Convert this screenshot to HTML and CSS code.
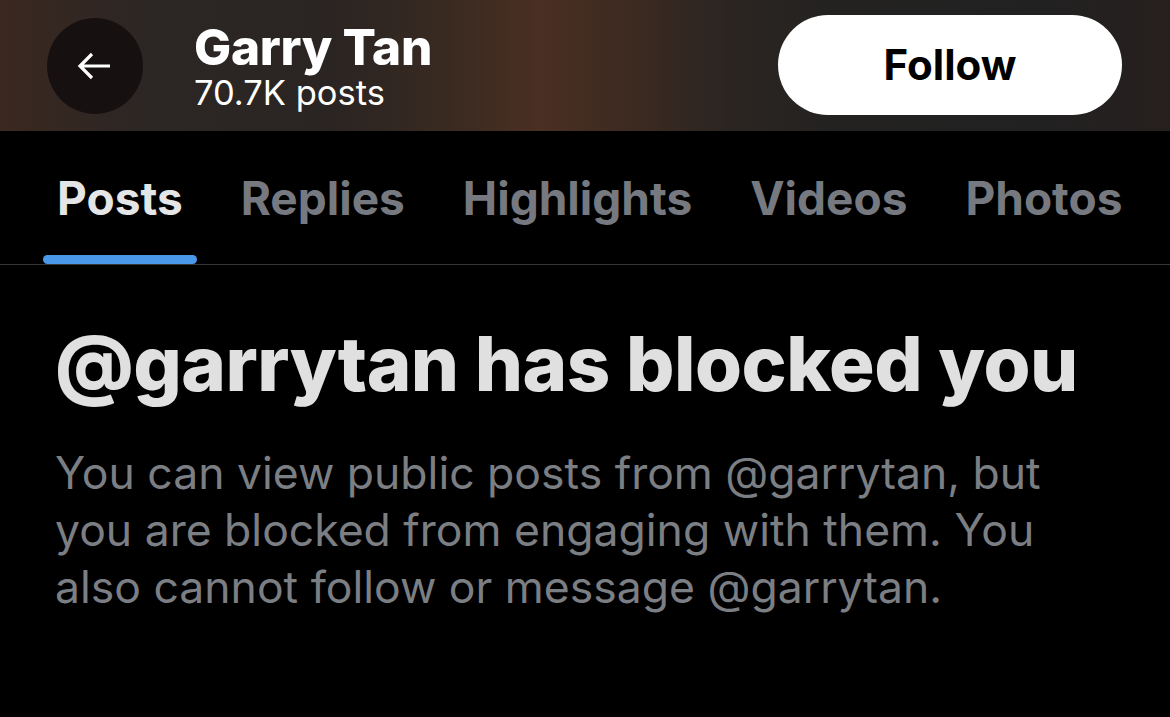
FILE: index.html
```html
<!DOCTYPE html>
<html>
<head>
<meta charset="utf-8">
<link rel="stylesheet" href="styles.css">
</head>
<body>
<header class="topbar">
  <button class="back" aria-label="Back">
    <svg viewBox="0 0 40 40" width="40" height="40"><path d="M35 20H5M17 8L5 20l12 12" fill="none" stroke="#fff" stroke-width="3.2" stroke-linecap="butt" stroke-linejoin="miter"/></svg>
  </button>
  <div class="who">
    <div class="name">Garry Tan</div>
    <div class="count">70.7K posts</div>
  </div>
  <button class="follow">Follow</button>
</header>
<nav class="tabs">
  <div class="tab active"><span>Posts</span></div>
  <div class="tab"><span>Replies</span></div>
  <div class="tab"><span>Highlights</span></div>
  <div class="tab"><span>Videos</span></div>
  <div class="tab"><span>Photos</span></div>
</nav>
<main class="blocked">
  <h1>@garrytan has blocked you</h1>
  <p>You can view public posts from @garrytan, but you are blocked from engaging with them. You also cannot follow or message @garrytan.</p>
</main>
</body>
</html>
```
FILE: styles.css
```css
html, body {
  margin: 0;
  padding: 0;
  background: #000;
  width: 1170px;
  height: 717px;
  overflow: hidden;
  font-family: Inter, "Liberation Sans", Arial, sans-serif;
}
.topbar {
  height: 131px;
  display: flex;
  align-items: center;
  padding: 0 48px 0 47px;
  box-sizing: border-box;
  background:
    linear-gradient(90deg, #3b2820 0%, #2c2624 12%, #2a2422 28%, #382a21 38%, #4a2f22 46%, #3e2b21 53%, #2b2521 62%, #232221 72%, #212121 88%, #261f1e 100%);
}
.back {
  width: 96px;
  height: 96px;
  border-radius: 50%;
  border: none;
  background: #161110;
  display: flex;
  align-items: center;
  justify-content: center;
  padding: 0;
  flex: none;
}
.who {
  margin-left: 51px;
  display: flex;
  flex-direction: column;
  color: #fff;
  flex: 1;
  margin-top: 2px;
}
.name {
  font-size: 49.5px;
  font-weight: 800;
  line-height: 52px;
  letter-spacing: -0.3px;
}
.count {
  font-size: 34.5px;
  line-height: 40px;
  font-weight: 400;
}
.follow {
  width: 344px;
  height: 100px;
  border-radius: 50px;
  border: none;
  background: #fff;
  color: #000;
  font-family: inherit;
  font-size: 42px;
  font-weight: 700;
  margin-top: -2px;
}
.tabs {
  display: flex;
  height: 133px;
  border-bottom: 1px solid #333538;
  padding-left: 43px;
}
.tab {
  position: relative;
  display: flex;
  align-items: center;
  justify-content: center;
  padding: 0 14px;
  margin-right: 30px;
  font-size: 46px;
  font-weight: 700;
  color: #767a80;
}
.tab.active {
  color: #e4e5e6;
}
.tab.active::after {
  content: "";
  position: absolute;
  left: 0;
  right: 0;
  bottom: 0;
  height: 9px;
  border-radius: 5px;
  background: #4a98ea;
}
.blocked {
  padding: 58px 55px 0;
}
.blocked h1 {
  margin: 0;
  font-size: 76px;
  font-weight: 800;
  color: #e0e0e0;
  letter-spacing: -0.5px;
  line-height: 80px;
}
.blocked p {
  margin: 42px 0 0;
  font-size: 44.5px;
  line-height: 57px;
  color: #7b7e83;
  width: 1040px;
}
```
